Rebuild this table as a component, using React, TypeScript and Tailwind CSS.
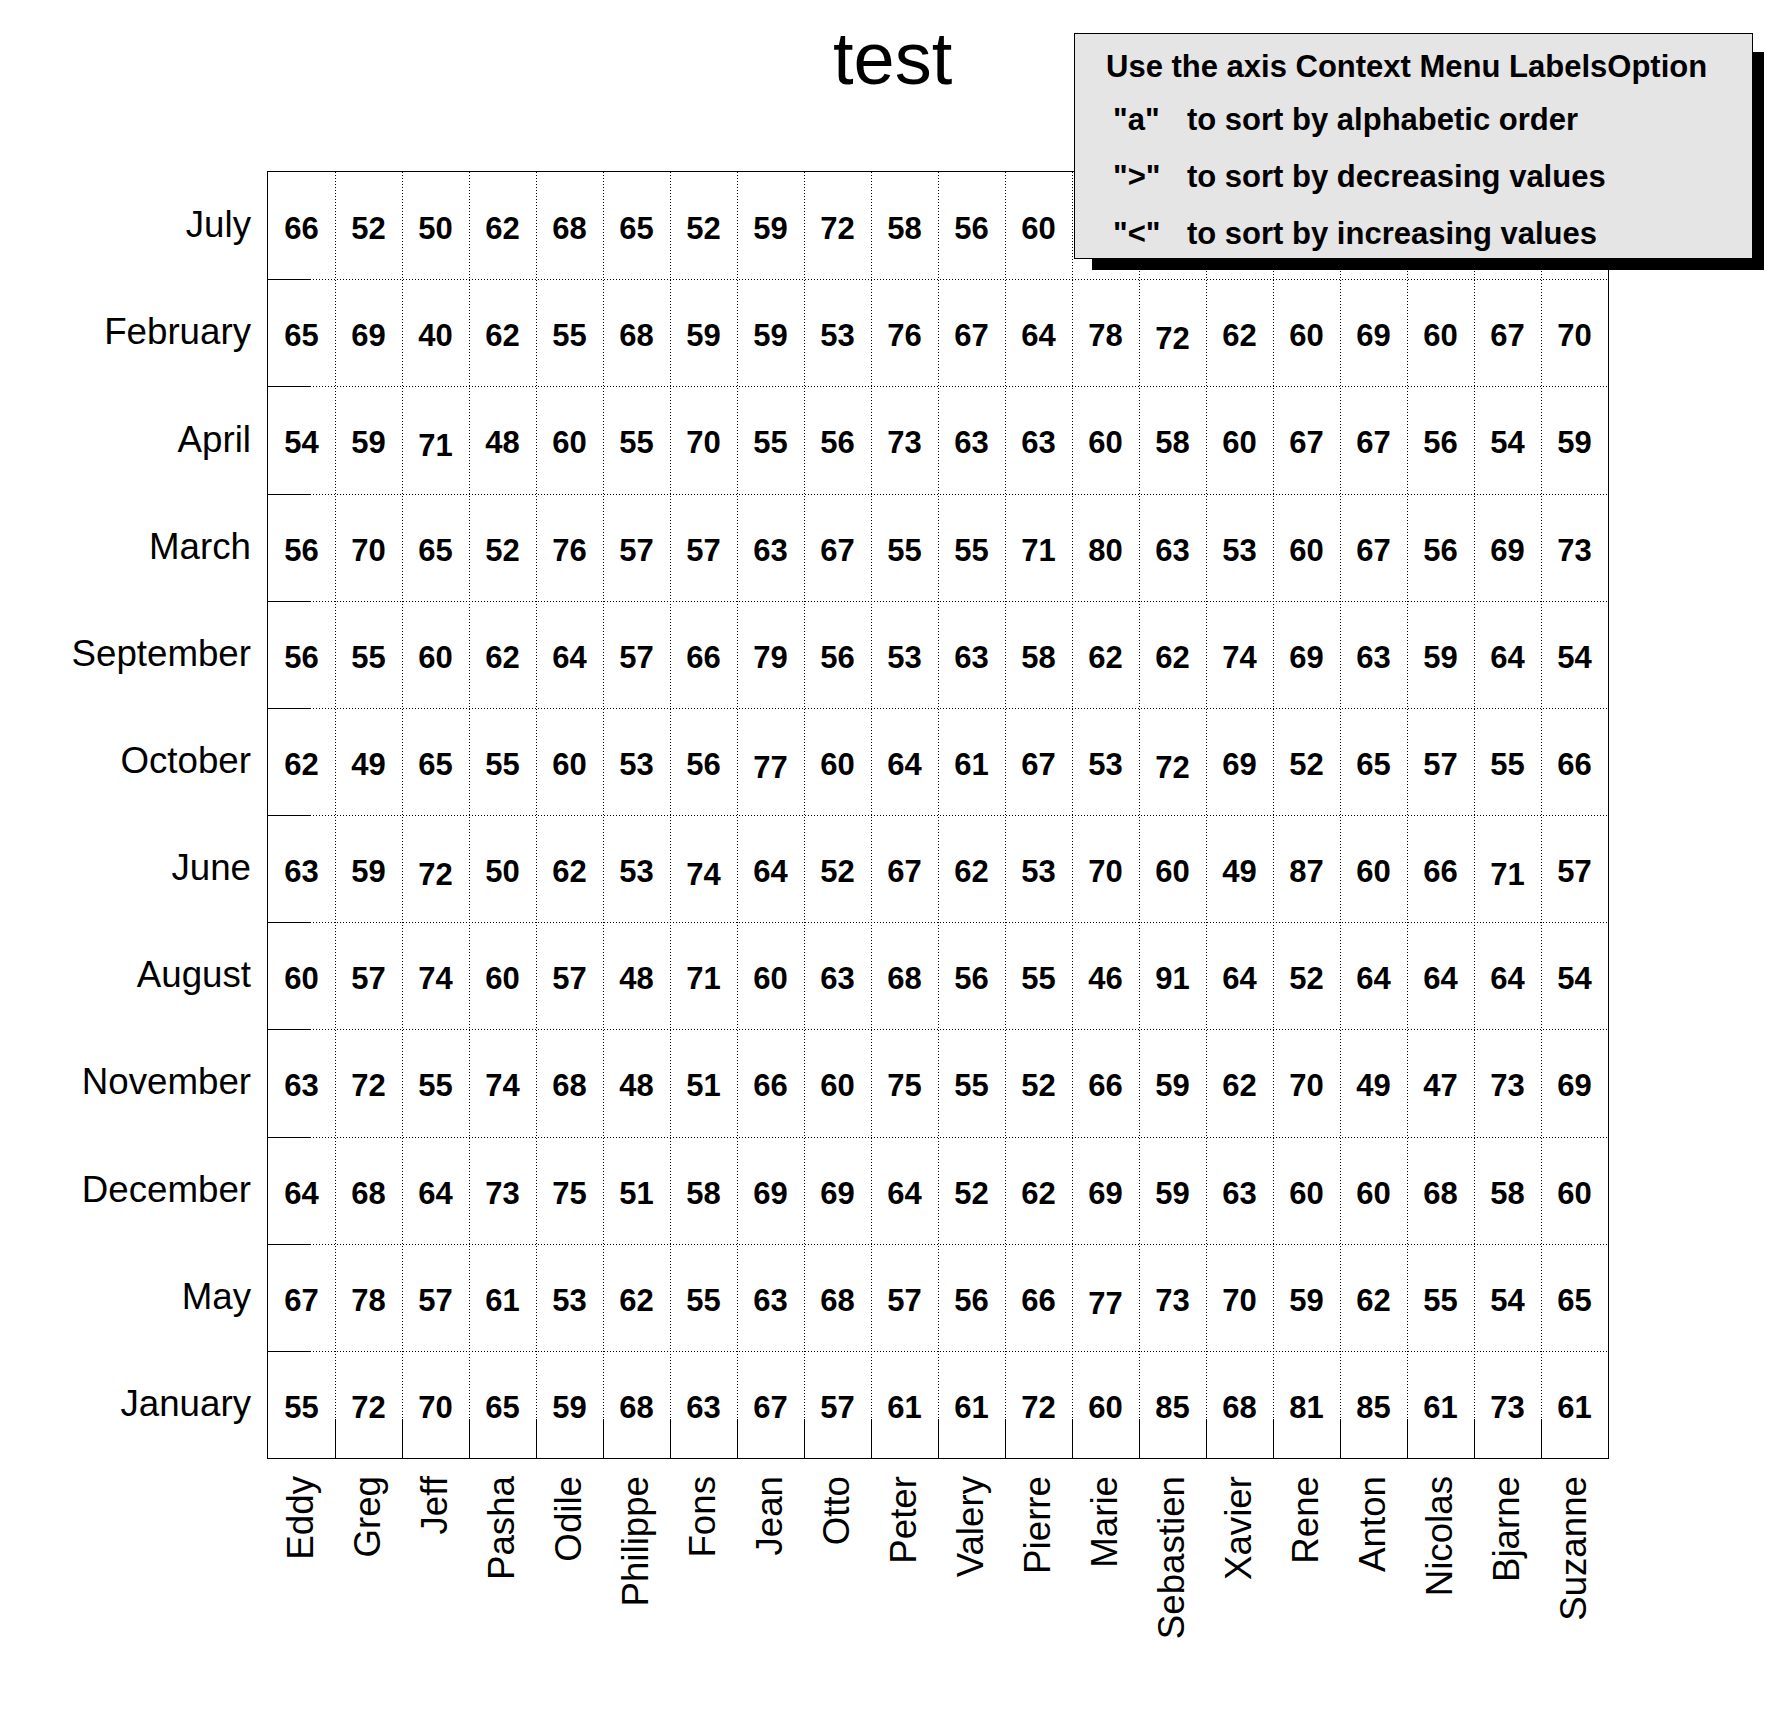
const months = [
  "July",
  "February",
  "April",
  "March",
  "September",
  "October",
  "June",
  "August",
  "November",
  "December",
  "May",
  "January",
]

const names = [
  "Eddy",
  "Greg",
  "Jeff",
  "Pasha",
  "Odile",
  "Philippe",
  "Fons",
  "Jean",
  "Otto",
  "Peter",
  "Valery",
  "Pierre",
  "Marie",
  "Sebastien",
  "Xavier",
  "Rene",
  "Anton",
  "Nicolas",
  "Bjarne",
  "Suzanne",
]

// null = cell hidden behind the legend box
const values: (number | null)[][] = [
  [66, 52, 50, 62, 68, 65, 52, 59, 72, 58, 56, 60, null, null, null, null, null, null, null, null],
  [65, 69, 40, 62, 55, 68, 59, 59, 53, 76, 67, 64, 78, 72, 62, 60, 69, 60, 67, 70],
  [54, 59, 71, 48, 60, 55, 70, 55, 56, 73, 63, 63, 60, 58, 60, 67, 67, 56, 54, 59],
  [56, 70, 65, 52, 76, 57, 57, 63, 67, 55, 55, 71, 80, 63, 53, 60, 67, 56, 69, 73],
  [56, 55, 60, 62, 64, 57, 66, 79, 56, 53, 63, 58, 62, 62, 74, 69, 63, 59, 64, 54],
  [62, 49, 65, 55, 60, 53, 56, 77, 60, 64, 61, 67, 53, 72, 69, 52, 65, 57, 55, 66],
  [63, 59, 72, 50, 62, 53, 74, 64, 52, 67, 62, 53, 70, 60, 49, 87, 60, 66, 71, 57],
  [60, 57, 74, 60, 57, 48, 71, 60, 63, 68, 56, 55, 46, 91, 64, 52, 64, 64, 64, 54],
  [63, 72, 55, 74, 68, 48, 51, 66, 60, 75, 55, 52, 66, 59, 62, 70, 49, 47, 73, 69],
  [64, 68, 64, 73, 75, 51, 58, 69, 69, 64, 52, 62, 69, 59, 63, 60, 60, 68, 58, 60],
  [67, 78, 57, 61, 53, 62, 55, 63, 68, 57, 56, 66, 77, 73, 70, 59, 62, 55, 54, 65],
  [55, 72, 70, 65, 59, 68, 63, 67, 57, 61, 61, 72, 60, 85, 68, 81, 85, 61, 73, 61],
]

// cells the renderer drew a couple of pixels lower
const lowered = new Set(["1-13", "2-2", "5-7", "5-13", "6-2", "6-6", "6-18", "10-12"])

const W = 1340
const H = 1286
const colW = W / 20
const rowH = H / 12

function GridLines() {
  return (
    <svg
      className="absolute inset-0"
      width={W}
      height={H}
      viewBox={`0 0 ${W} ${H}`}
      shapeRendering="crispEdges"
    >
      {Array.from({ length: 19 }, (_, i) => {
        const x = Math.round((i + 1) * colW) + 0.5
        return (
          <g key={`v${i}`}>
            <line x1={x} x2={x} y1={0} y2={H} stroke="#000" strokeWidth={1} strokeDasharray="1 2" />
            <line x1={x} x2={x} y1={H - 39} y2={H} stroke="#000" strokeWidth={1} />
          </g>
        )
      })}
      {Array.from({ length: 11 }, (_, i) => {
        const y = Math.round((i + 1) * rowH) + 0.5
        return (
          <g key={`h${i}`}>
            <line x1={0} x2={W} y1={y} y2={y} stroke="#000" strokeWidth={1} strokeDasharray="1 2" />
            <line x1={0} x2={42} y1={y} y2={y} stroke="#000" strokeWidth={1} />
          </g>
        )
      })}
    </svg>
  )
}

function Legend() {
  const rows = [
    ['"a"', "to sort by alphabetic order", "mt-[22px]"],
    ['">"', "to sort by decreasing values", "mt-[26px]"],
    ['"<"', "to sort by increasing values", "mt-[26px]"],
  ]
  return (
    <>
      {/* shadow */}
      <div className="absolute left-[1092px] top-[52px] h-[218px] w-[672px] bg-black" />
      <div className="absolute left-[1074px] top-[33px] flex h-[226px] w-[679px] flex-col border border-black bg-[#e5e5e5] text-[31px] font-bold leading-none">
        <div className="mt-[17px] whitespace-nowrap pl-[31px]">Use the axis Context Menu LabelsOption</div>
        {rows.map(([key, text, mt]) => (
          <div key={key} className={`flex whitespace-nowrap pl-[38px] ${mt}`}>
            <span className="w-[74px]">{key}</span>
            <span>{text}</span>
          </div>
        ))}
      </div>
    </>
  )
}

export default function App() {
  return (
    <div className="relative h-[1716px] w-[1788px] bg-white font-['Liberation_Sans',Arial,sans-serif] text-black">
      {/* Title */}
      <div className="pl-[833px] pt-[22px] text-[74px] leading-none">test</div>

      {/* Plot */}
      <div className="mt-[75px] flex">
        <div className="flex w-[267px] flex-col pr-[16px] pt-px">
          {months.map((m) => (
            <div
              key={m}
              className="flex h-[107.17px] items-center justify-end whitespace-nowrap text-[36.7px] leading-none"
            >
              {m}
            </div>
          ))}
        </div>
        <div className="relative h-[1288px] w-[1342px] border border-black">
          <GridLines />
          <div className="relative grid h-full grid-cols-[repeat(20,minmax(0,1fr))] grid-rows-[repeat(12,minmax(0,1fr))]">
            {values.map((row, r) =>
              row.map((v, c) => (
                <div key={`${r}-${c}`} className="flex items-center justify-center">
                  {v !== null && (
                    <span
                      className={
                        lowered.has(`${r}-${c}`)
                          ? "translate-y-[6px] text-[31px] font-bold leading-none"
                          : "translate-y-[3px] text-[31px] font-bold leading-none"
                      }
                    >
                      {v}
                    </span>
                  )}
                </div>
              ))
            )}
          </div>
        </div>
      </div>

      {/* Column labels */}
      <div className="flex items-start pl-[268px] pt-[17px]">
        {names.map((n) => (
          <div key={n} className="flex w-[67px] items-start justify-center">
            <span className="rotate-180 whitespace-nowrap text-[36.7px] leading-none [writing-mode:vertical-rl]">
              {n}
            </span>
          </div>
        ))}
      </div>

      <Legend />
    </div>
  )
}
